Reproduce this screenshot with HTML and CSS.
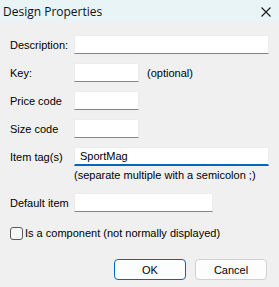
FILE: index.html
```html
<!DOCTYPE html>
<html lang="en">
  <head>
    <meta charset="UTF-8" />
    <title>Design Properties</title>
    <link rel="stylesheet" href="styles.css">
  </head>
  <body>
    <div class="dialog">
      <div class="titlebar">
        <span class="title">Design Properties</span>
        <svg class="close" width="10" height="10" viewBox="0 0 10 10">
          <path d="M0.5 0.5 L9.5 9.5 M9.5 0.5 L0.5 9.5" stroke="#1a1a1a" stroke-width="1.1" />
        </svg>
      </div>
      <div class="content">
        <div class="row">
          <label class="lbl">Description:</label>
          <div class="field wide"></div>
        </div>
        <div class="row">
          <label class="lbl">Key:</label>
          <div class="field short"></div>
          <span class="hint">(optional)</span>
        </div>
        <div class="row">
          <label class="lbl">Price code</label>
          <div class="field short"></div>
        </div>
        <div class="row">
          <label class="lbl">Size code</label>
          <div class="field short"></div>
        </div>
        <div class="row tag-row">
          <label class="lbl">Item tag(s)</label>
          <div class="field wide focused">SportMag</div>
        </div>
        <div class="note">(separate multiple with a semicolon ;)</div>
        <div class="row default-row">
          <label class="lbl">Default item</label>
          <div class="field mid"></div>
        </div>
        <div class="check-row">
          <span class="box"></span>
          <span>Is a component (not normally displayed)</span>
        </div>
        <div class="buttons">
          <button class="btn primary">OK</button>
          <button class="btn">Cancel</button>
        </div>
      </div>
    </div>
  </body>
</html>
```

FILE: styles.css
```css
* {
  margin: 0;
  padding: 0;
  box-sizing: border-box;
}
body {
  width: 279px;
  height: 287px;
  background: #f0f0f0;
  font-family: "Liberation Sans", Arial, sans-serif;
  font-size: 11px;
  color: #000;
  overflow: hidden;
}
.titlebar {
  height: 22px;
  background: #e9f4f7;
  display: flex;
  align-items: center;
  justify-content: space-between;
  padding: 0 8px 0 3px;
}
.title {
  font-family: "Open Sans", "Noto Sans", sans-serif;
  font-size: 12px;
  color: #111;
}
.close {
  margin-top: 2px;
}
.content {
  padding: 13px 10px 0 10px;
}
.row {
  display: flex;
  align-items: center;
  height: 19px;
  margin-bottom: 9px;
}
.lbl {
  width: 64px;
  flex: none;
}
.field {
  height: 19px;
  background: #fff;
  border: 1px solid #ececec;
  border-bottom: 1px solid #858585;
  font-size: 11px;
  line-height: 17px;
  padding-left: 5px;
}
.wide {
  width: 195px;
}
.short {
  width: 65px;
}
.mid {
  width: 139px;
}
.hint {
  margin-left: 8px;
}
.tag-row {
  margin-top: 3px;
  margin-bottom: 0;
}
.focused {
  border-bottom: 2px solid #0067c0;
  line-height: 16px;
}
.note {
  margin-left: 64px;
  height: 19px;
  line-height: 19px;
  margin-bottom: 8px;
}
.default-row {
  margin-bottom: 14px;
}
.check-row {
  display: flex;
  align-items: center;
  height: 14px;
}
.box {
  width: 13px;
  height: 13px;
  border: 1px solid #5a5a5a;
  border-radius: 3px;
  background: #f7f7f7;
  margin-right: 2px;
}
.buttons {
  display: flex;
  justify-content: flex-end;
  gap: 9px;
  margin-top: 19px;
  padding-right: 2px;
}
.btn {
  width: 72px;
  height: 21px;
  background: #fdfdfd;
  border: 1px solid #d0d0d0;
  border-radius: 4px;
  font-family: "Liberation Sans", Arial, sans-serif;
  font-size: 11px;
  color: #000;
}
.primary {
  border: 1px solid #0067c0;
}
```
